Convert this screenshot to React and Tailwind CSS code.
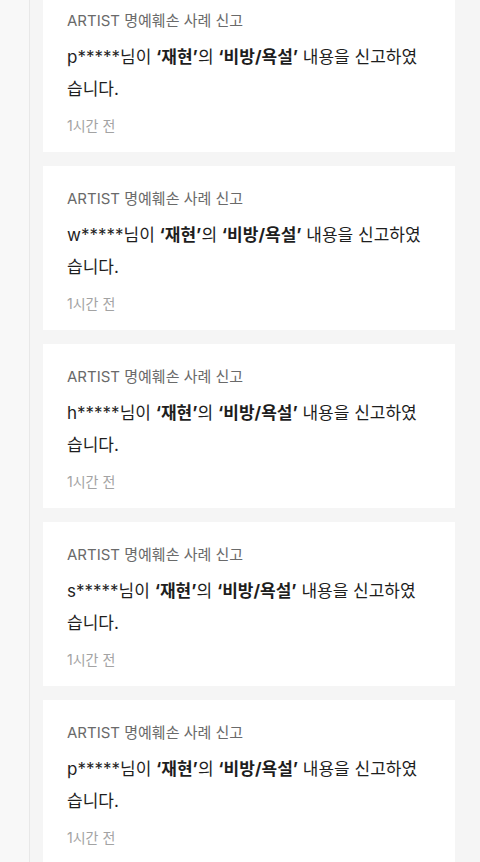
const reports = [
  { user: 'p*****' },
  { user: 'w*****' },
  { user: 'h*****' },
  { user: 's*****' },
  { user: 'p*****' },
]

const ReportCard = ({ user }) => {
  return (
    <div className="bg-white pt-[22px] pb-[16px] pl-6 pr-[30px]">
      <p className="text-[15px] leading-[22px] text-[#6a6a6a]">ARTIST 명예훼손 사례 신고</p>
      <p className="mt-[9px] text-[17px] leading-[32px] text-[#1e1e1e]">
        {user}님이 <b className="font-bold">‘재현’</b>의 <b className="font-bold">‘비방/욕설’</b> 내용을 신고하였습니다.
      </p>
      <p className="mt-[11px] text-[14px] leading-[20px] text-[#a3a3a3]">1시간 전</p>
    </div>
  )
}

export default function App() {
  return (
    <div
      className="flex h-[862px] w-[480px] overflow-hidden bg-[#f5f5f5]"
      style={{ fontFamily: 'Inter, "Noto Sans CJK KR", sans-serif' }}
    >
      <div className="w-[30px] shrink-0 bg-[#f8f8f8] border-r border-[#e8e8e8]" />
      <div className="flex-1 pl-[13px] pr-[25px]">
        <div className="-mt-[12px] flex flex-col gap-[14px]">
          {reports.map((r, i) => (
            <ReportCard key={i} user={r.user} />
          ))}
        </div>
      </div>
    </div>
  )
}
